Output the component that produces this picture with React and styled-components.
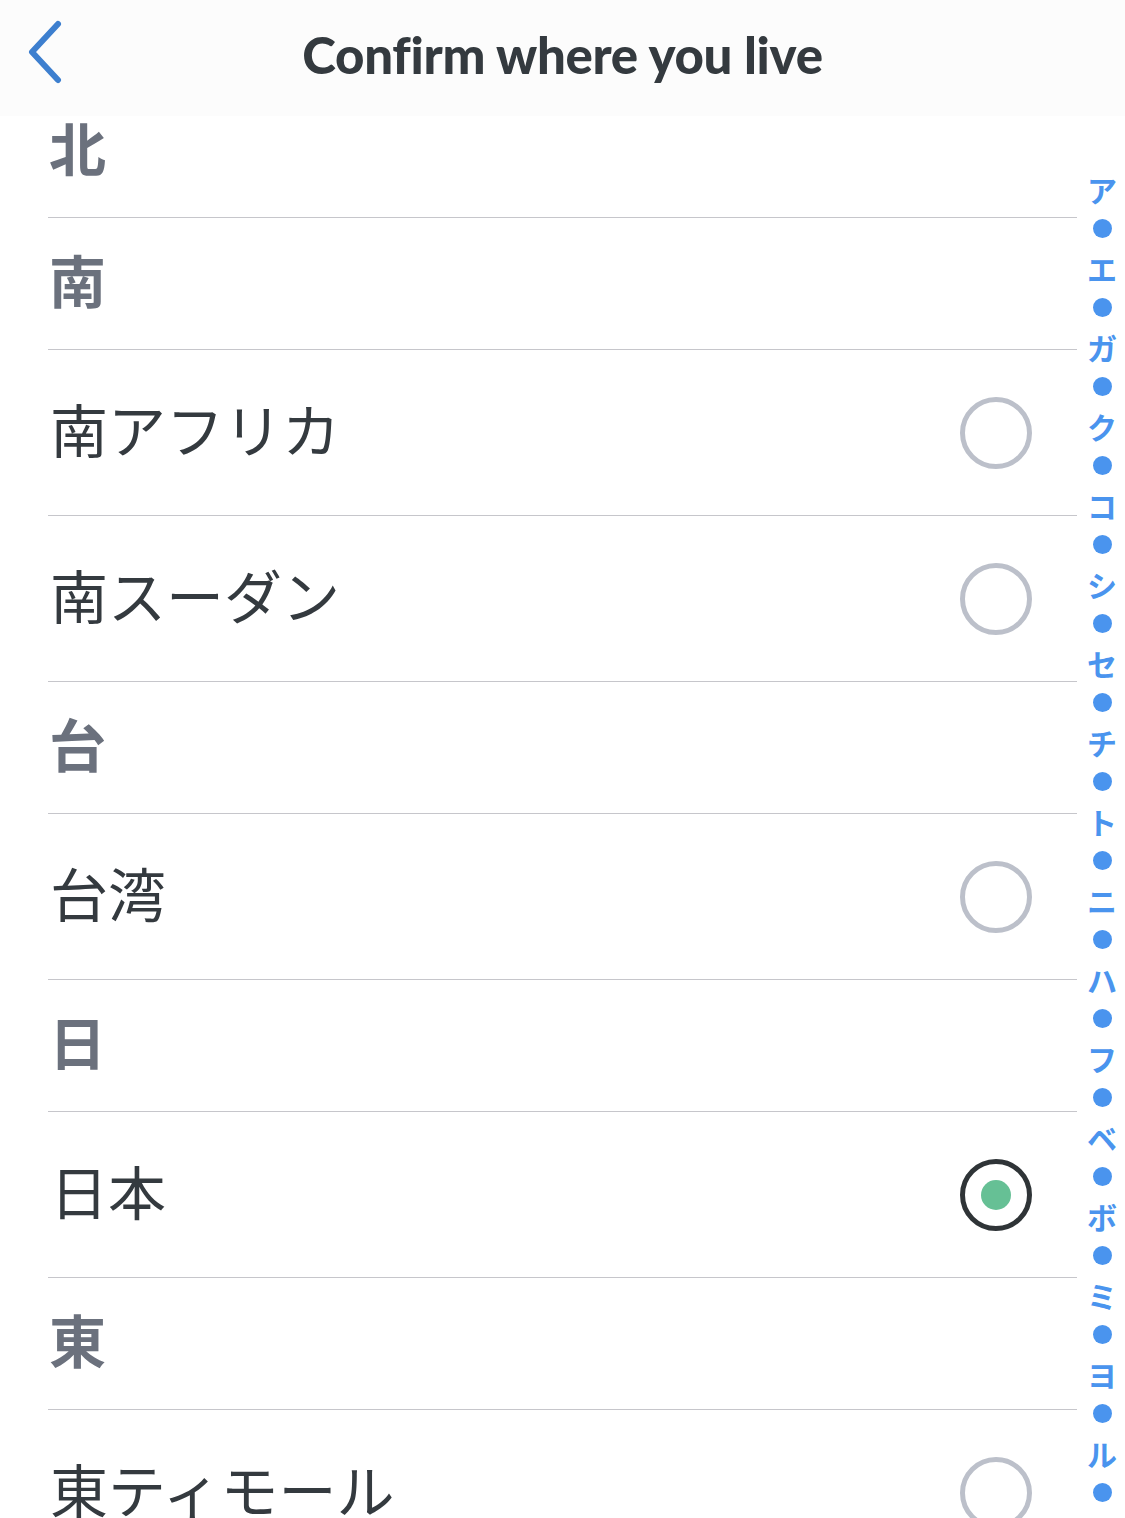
import React from 'react';
import { styled, createGlobalStyle } from 'styled-components';

const GlobalStyle = createGlobalStyle`
  html, body {
    margin: 0;
    padding: 0;
    background: #ffffff;
  }
  body {
    font-family: "Noto Sans CJK JP", "Noto Sans", sans-serif;
    overflow: hidden;
  }
`;

const rows = [
  { type: 'section', label: '北' },
  { type: 'section', label: '南' },
  { type: 'item', label: '南アフリカ' },
  { type: 'item', label: '南スーダン' },
  { type: 'section', label: '台' },
  { type: 'item', label: '台湾' },
  { type: 'section', label: '日' },
  { type: 'item', label: '日本', selected: true },
  { type: 'section', label: '東' },
  { type: 'item', label: '東ティモール' },
];

const indexLetters = ['ア', 'エ', 'ガ', 'ク', 'コ', 'シ', 'セ', 'チ', 'ト', 'ニ', 'ハ', 'フ', 'ベ', 'ボ', 'ミ', 'ヨ', 'ル'];

export default function App() {
  return (
    <>
      <GlobalStyle />
      <Screen>
        <Header>
          <BackButton aria-label="back">
            <svg width="40" height="64" viewBox="0 0 40 64" fill="none">
              <path d="M34 4 L8 32 L34 60" stroke="#3d7fcf" strokeWidth="6" strokeLinecap="round" strokeLinejoin="round" />
            </svg>
          </BackButton>
          <Title>Confirm where you live</Title>
        </Header>
        <List>
          {rows.map((row, i) =>
            row.type === 'section' ? (
              <SectionRow key={i}>
                <SectionLabel>{row.label}</SectionLabel>
              </SectionRow>
            ) : (
              <ItemRow key={i}>
                <ItemLabel>{row.label}</ItemLabel>
                <Radio $selected={row.selected}>{row.selected && <RadioDot />}</Radio>
              </ItemRow>
            )
          )}
        </List>
        <IndexBar>
          {indexLetters.map((l) => (
            <IndexGroup key={l}>
              <IndexLetter>{l}</IndexLetter>
              <IndexDot />
            </IndexGroup>
          ))}
        </IndexBar>
      </Screen>
    </>
  );
}

const Screen = styled.div`
  position: relative;
  width: 1125px;
  height: 1518px;
  overflow: hidden;
  background: #ffffff;
`;

const Header = styled.header`
  position: relative;
  z-index: 2;
  height: 116px;
  background: #fcfcfc;
  display: flex;
  align-items: center;
  justify-content: center;
`;

const BackButton = styled.button`
  position: absolute;
  left: 24px;
  top: 20px;
  border: none;
  background: none;
  padding: 0;
  display: flex;
`;

const Title = styled.h1`
  margin: 0 0 8px 0;
  font-family: Lato, "Open Sans", sans-serif;
  font-weight: 900;
  font-size: 51px;
  color: #343a3f;
  letter-spacing: -0.3px;
`;

const List = styled.div`
  margin-top: -30px;
  padding-left: 48px;
  padding-right: 48px;
`;

const SectionRow = styled.div`
  height: 131px;
  display: flex;
  align-items: center;
  border-bottom: 1px solid #c6c6cb;
`;

const SectionLabel = styled.span`
  font-family: "Noto Sans CJK JP", sans-serif;
  font-weight: 700;
  font-size: 57px;
  line-height: 1.2;
  color: #6b717d;
  padding-left: 1px;
  padding-bottom: 10px;
`;

const ItemRow = styled.div`
  height: 165px;
  display: flex;
  align-items: center;
  justify-content: space-between;
  border-bottom: 1px solid #c6c6cb;
  padding-right: 45px;
`;

const ItemLabel = styled.span`
  font-family: "Noto Sans CJK JP", sans-serif;
  font-weight: 400;
  font-size: 58px;
  line-height: 1.2;
  color: #343a3f;
  padding-left: 2px;
  padding-bottom: 8px;
`;

const Radio = styled.div`
  width: 62px;
  height: 62px;
  border-radius: 50%;
  border: 5px solid ${(p) => (p.$selected ? '#2f3437' : '#bcc0ca')};
  display: flex;
  align-items: center;
  justify-content: center;
`;

const RadioDot = styled.div`
  width: 30px;
  height: 30px;
  border-radius: 50%;
  background: #66c095;
`;

const IndexBar = styled.div`
  position: absolute;
  z-index: 3;
  right: 5px;
  top: 170px;
  width: 36px;
  display: flex;
  flex-direction: column;
  align-items: center;
`;

const IndexGroup = styled.div`
  display: flex;
  flex-direction: column;
  align-items: center;
`;

const IndexLetter = styled.span`
  height: 38px;
  line-height: 38px;
  font-family: "Noto Sans CJK JP", sans-serif;
  font-weight: 700;
  font-size: 30px;
  color: #4a94ee;
`;

const IndexDot = styled.span`
  width: 19px;
  height: 19px;
  margin: 11px 0 11px;
  border-radius: 50%;
  background: #4a94ee;
`;
